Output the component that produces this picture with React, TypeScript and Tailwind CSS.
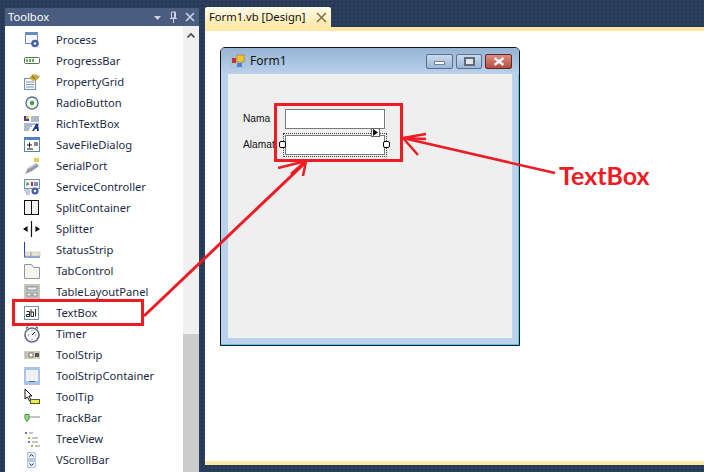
import type { ReactNode } from "react"

const font = "font-['Noto_Sans','Open_Sans',sans-serif]"

function Ico({ children }: { children: ReactNode }) {
  return (
    <svg width="18" height="18" viewBox="0 0 18 18" className="shrink-0">
      {children}
    </svg>
  )
}

const tools: { name: string; icon: ReactNode }[] = [
  {
    name: "Process",
    icon: (
      <>
        <rect x="2.500" y="1.500" width="12" height="11" fill="#f4f7fb" stroke="#6f8fb8" />
        <rect x="3" y="2" width="11" height="2" fill="#5d8ccb" />
        <circle cx="12" cy="12.500" r="3.800" fill="#4a5fa8" />
        <circle cx="12" cy="12.500" r="1.200" fill="#fff" />
      </>
    ),
  },
  {
    name: "ProgressBar",
    icon: (
      <>
        <rect x="1.500" y="5.500" width="15" height="6" rx="1" fill="#fff" stroke="#666" />
        <rect x="3" y="7" width="2" height="3" fill="#4fbf3f" />
        <rect x="6" y="7" width="2" height="3" fill="#4fbf3f" />
        <rect x="9" y="7" width="2" height="3" fill="#4fbf3f" />
      </>
    ),
  },
  {
    name: "PropertyGrid",
    icon: (
      <>
        <rect x="1.500" y="5.500" width="11" height="11" fill="#f3f6fa" stroke="#7d8fa8" />
        <path d="M3 9h8M3 11.500h8M3 14h8" stroke="#7d9cc4" />
        <path d="M6 5l4-4 7 2-3 4-4 1z" fill="#c9a93f" />
        <path d="M9 3l3 3" stroke="#6f5a17" />
      </>
    ),
  },
  {
    name: "RadioButton",
    icon: (
      <>
        <circle cx="9" cy="9" r="6" fill="#f3f6fa" stroke="#5d7188" strokeWidth="1.400" />
        <circle cx="9" cy="9" r="2.200" fill="#37a53c" />
      </>
    ),
  },
  {
    name: "RichTextBox",
    icon: (
      <>
        <rect x="1" y="1" width="5" height="5" fill="#1c3fc4" />
        <rect x="3" y="1" width="3" height="3" fill="#e8c41f" />
        <rect x="1" y="4" width="2" height="2" fill="#d02020" />
        <path d="M8 2h8M8 4h8M8 6h8M1 9h15M1 11h8M1 13h6M1 15h5" stroke="#5f7596" />
        <path d="M9 16l4-7h2l1 7h-2v-2h-2l-1 2z" fill="#1c3a8c" />
      </>
    ),
  },
  {
    name: "SaveFileDialog",
    icon: (
      <>
        <rect x="1.500" y="1.500" width="15" height="14" fill="#fff" stroke="#5f7ea8" />
        <rect x="2" y="2" width="14" height="2" fill="#4c86cf" />
        <path d="M4 9h5M6.500 6.500v5M11 7h4M11 9h4M4 13h6" stroke="#111" />
      </>
    ),
  },
  {
    name: "SerialPort",
    icon: (
      <>
        <path d="M2 17l3-6 8-5 3 3-7 5z" fill="#8e98a6" />
        <path d="M5 11l8-5 1 1-8 5z" fill="#cdd3da" />
        <rect x="11" y="1" width="5" height="4" fill="#e6c94f" />
      </>
    ),
  },
  {
    name: "ServiceController",
    icon: (
      <>
        <rect x="1.500" y="1.500" width="15" height="9" fill="#eef2f7" stroke="#7d8fa8" />
        <path d="M3.500 4v4l3-2z" fill="#2c9b3a" />
        <rect x="8" y="4" width="2" height="4" fill="#c43030" />
        <path d="M12 4v4M14 4v4" stroke="#3a5ea8" strokeWidth="1.300" />
        <path d="M1 12h6M2 14h5M3 16h4" stroke="#7d9cc4" />
        <circle cx="12" cy="13" r="3.600" fill="#4a5fa8" />
        <circle cx="12" cy="13" r="1.200" fill="#fff" />
      </>
    ),
  },
  {
    name: "SplitContainer",
    icon: (
      <>
        <rect x="1.500" y="1.500" width="14" height="14" fill="#f1f1f1" stroke="#111" />
        <path d="M8.500 1.500v14" stroke="#111" />
      </>
    ),
  },
  {
    name: "Splitter",
    icon: <path d="M8.500 1v16M1 9h3M13 9h3M4 7v4l-3-2zM13 7v4l3-2z" stroke="#111" fill="#111" strokeWidth="1.200" />,
  },
  {
    name: "StatusStrip",
    icon: (
      <>
        <path d="M1.500 1v15H17" stroke="#2040c0" fill="none" />
        <rect x="2" y="11" width="15" height="4" fill="#e8e4d2" stroke="#b9b59e" strokeWidth="0.500" />
        <path d="M8 11v4" stroke="#999" />
      </>
    ),
  },
  {
    name: "TabControl",
    icon: <path d="M1.500 16.500v-14h7l2 3h6v11z" fill="#f7f5ec" stroke="#8c97a6" />,
  },
  {
    name: "TableLayoutPanel",
    icon: (
      <>
        <rect x="1" y="1" width="16" height="16" fill="#c9c5b2" />
        <rect x="4" y="4" width="10" height="3" fill="#f3f3f3" stroke="#5a78a8" strokeWidth="0.700" />
        <rect x="4" y="10" width="4" height="3" fill="#f3f3f3" stroke="#5a78a8" strokeWidth="0.700" />
        <rect x="10" y="10" width="4" height="3" fill="#f3f3f3" stroke="#5a78a8" strokeWidth="0.700" />
      </>
    ),
  },
  {
    name: "TextBox",
    icon: (
      <>
        <rect x="1.500" y="2.500" width="14" height="13" fill="#fff" stroke="#6f8fb8" />
        <path d="M3.500 7.500h3v5h-3v-2h3M8 5v7.500h2.500V8H8M12.500 5v7.500" stroke="#111" fill="none" strokeWidth="0.900" />
      </>
    ),
  },
  {
    name: "Timer",
    icon: (
      <>
        <circle cx="9" cy="10" r="7" fill="#f5f5f5" stroke="#5c6a8c" strokeWidth="1.600" />
        <path d="M5 1.500l-2 2M13 1.500l2 2" stroke="#5c6a8c" strokeWidth="1.500" />
        <path d="M9 10l3-3" stroke="#111" />
        <path d="M9 5v1M5 10h1M12 10h1M9 14v1" stroke="#777" />
      </>
    ),
  },
  {
    name: "ToolStrip",
    icon: (
      <>
        <rect x="1" y="5" width="16" height="8" fill="#d2ceb9" />
        <path d="M3 6.500v5" stroke="#8c8974" strokeDasharray="1 1" />
        <rect x="6" y="7" width="4" height="4" fill="#fff" stroke="#444" strokeWidth="0.700" />
        <rect x="12" y="7" width="4" height="4" fill="#555" />
      </>
    ),
  },
  {
    name: "ToolStripContainer",
    icon: (
      <>
        <rect x="1" y="0" width="16" height="18" fill="#a9c4e6" />
        <rect x="3" y="3" width="12" height="11" fill="#f1f1f1" />
        <rect x="6" y="14" width="6" height="1" fill="#4a6ea8" />
      </>
    ),
  },
  {
    name: "ToolTip",
    icon: (
      <>
        <path d="M2 1v10l2.500-2 2 4 1.500-1-2-4h3z" fill="#fff" stroke="#111" />
        <rect x="7.500" y="11.500" width="9" height="4" fill="#f1ee3a" stroke="#555" />
      </>
    ),
  },
  {
    name: "TrackBar",
    icon: (
      <>
        <path d="M6 8h11" stroke="#8a8a8a" />
        <path d="M2 5.500h4v4l-2 3-2-3z" fill="#9fdc88" stroke="#3d8a3a" />
      </>
    ),
  },
  {
    name: "TreeView",
    icon: (
      <>
        <rect x="2" y="2" width="2" height="2" fill="#6a7f9c" />
        <rect x="5" y="7" width="2" height="2" fill="#c9a93f" />
        <rect x="5" y="11" width="2" height="2" fill="#6a7f9c" />
        <rect x="8" y="15" width="2" height="2" fill="#c9a93f" />
        <path d="M6 3h4M9 8h6M9 12h6M12 16h5" stroke="#8a8a8a" />
      </>
    ),
  },
  {
    name: "VScrollBar",
    icon: (
      <>
        <rect x="4" y="1" width="9" height="16" fill="#b5c9e3" />
        <rect x="5" y="2" width="7" height="5" fill="#e3ecf7" />
        <rect x="5" y="11" width="7" height="5" fill="#e3ecf7" />
        <path d="M6.500 5.500l2-2 2 2M6.500 12.500l2 2 2-2" stroke="#334" fill="none" />
      </>
    ),
  },
]

function Annotations() {
  const red = "#ed1c24"
  return (
    <svg width="704" height="472" viewBox="0 0 704 472" className="absolute left-0 top-0 pointer-events-none">
      <g fill="none" stroke={red} strokeWidth="3">
        <rect x="13.500" y="300.500" width="129" height="24" />
        <rect x="275.500" y="104.500" width="126" height="56" />
        {/* big arrow from toolbox */}
        <path d="M144 316 L306 162" />
        <path d="M306 161 L278 168 M306 161 L291 174 M306 161 L303 176" strokeWidth="2.500" />
        {/* arrow from the label */}
        <path d="M555 173 L403 138" strokeWidth="2.500" />
        <path d="M403 138 L426 134 M403 138 L426 139 M403 138 L418 155" strokeWidth="2.500" />
      </g>
    </svg>
  )
}

export default function App() {
  return (
    <div className={`relative w-[704px] h-[472px] overflow-hidden bg-[#2c3e5e] bg-[radial-gradient(#25344f_1px,transparent_1px)] bg-[length:4px_4px] ${font}`}>
      <div className="flex h-full pl-[5px] pt-[8px]">
        {/* toolbox */}
        <aside className="w-[194px] flex flex-col shrink-0">
          <div className="h-[18px] bg-[#4a5d80] flex items-center justify-between pl-[3px] pr-[4px] text-white text-[11.200px] leading-none rounded-t-[1px]">
            <span>Toolbox</span>
            <div className="flex items-center gap-[7px] text-[#ced4df]">
              <svg width="9" height="9" viewBox="0 0 9 9">
                <path d="M1 3h7L4.500 7z" fill="#ced4df" />
              </svg>
              <svg width="9" height="12" viewBox="0 0 9 12">
                <path d="M2.500 1h4v6h-4zM1 7.500h7M4.500 8v4M5.500 1v6" stroke="#ced4df" fill="none" />
              </svg>
              <svg width="10" height="10" viewBox="0 0 10 10">
                <path d="M1 1l8 8M9 1l-8 8" stroke="#ced4df" strokeWidth="1.600" />
              </svg>
            </div>
          </div>
          <div className="flex-1 flex bg-white min-h-0">
            <div className="flex-1 pt-[3px] overflow-hidden">
              {tools.map((t) => (
                <div key={t.name} className="h-[21px] flex items-center pl-[18px] gap-[15px] text-[11.200px] text-[#1b2a44]">
                  <Ico>{t.icon}</Ico>
                  <span className="leading-none">{t.name}</span>
                </div>
              ))}
            </div>
            <div className="w-[16px] bg-[#f0f0f0] flex flex-col justify-between">
              <svg width="16" height="18" viewBox="0 0 16 18">
                <path d="M4.500 11.500L8 8l3.500 3.500" stroke="#444" strokeWidth="1.600" fill="none" />
              </svg>
              <div className="h-[138px] bg-[#cdcdcd]" />
            </div>
          </div>
        </aside>

        {/* designer */}
        <main className="flex-1 ml-[6px] flex flex-col min-w-0 pb-[7px]">
          <div className="flex h-[19px] shrink-0">
            <div className="w-[126px] h-[20px] -mt-[1px] bg-gradient-to-b from-[#fffbea] to-[#ffe8a6] rounded-t-[2px] flex items-center justify-between pl-[4px] pr-[4px] text-[11.200px] text-[#111]">
              <span className="leading-none whitespace-nowrap">Form1.vb [Design]</span>
              <svg width="11" height="11" viewBox="0 0 11 11">
                <path d="M1 1l9 9M10 1l-9 9" stroke="#7d6f45" strokeWidth="1.500" />
              </svg>
            </div>
          </div>
          <div className="flex-1 bg-white border-y-4 border-[#ffe8a6] pl-[15px] pt-[16px]">
            {/* the form */}
            <div className="w-[300px] h-[299px] rounded-t-[5px] border border-[#14181e] bg-[#b9d1ea] shadow-[inset_-1px_-1px_0_#4fc8ec] flex flex-col px-[7px] pb-[7px]">
              <div className="h-[26px] shrink-0 flex items-center justify-between -mx-[7px] pl-[10px] pr-[7px] rounded-t-[4px] bg-gradient-to-b from-[#97b4d4] to-[#b9d1ea]">
                <div className="flex items-center gap-[4px] text-[12px] text-[#111]">
                  <svg width="15" height="14" viewBox="0 0 15 14">
                    <rect x="0.500" y="0.500" width="14" height="13" fill="none" stroke="#a9b4c0" strokeWidth="0.500" />
                    <rect x="6" y="1" width="7" height="7" fill="#f4c430" stroke="#a9821c" strokeWidth="0.700" />
                    <rect x="1" y="4" width="4" height="5" fill="#c43030" />
                    <rect x="6" y="9" width="5" height="4" fill="#4a84d8" />
                  </svg>
                  <span className="leading-none">Form1</span>
                </div>
                <div className="flex gap-[3px]">
                  <div className="w-[27px] h-[15px] rounded-[2px] border border-[#5d6f88] bg-gradient-to-b from-[#c9dbef] to-[#9cb7d6] flex items-center justify-center">
                    <div className="w-[11px] h-[4px] bg-white border border-[#7a8290] mt-[4px]" />
                  </div>
                  <div className="w-[26px] h-[15px] rounded-[2px] border border-[#5d6f88] bg-gradient-to-b from-[#c9dbef] to-[#9cb7d6] flex items-center justify-center">
                    <div className="w-[11px] h-[9px] bg-[#dfe6ee] border-2 border-[#646c7a]" />
                  </div>
                  <div className="w-[27px] h-[15px] rounded-[2px] border border-[#5a2a26] bg-gradient-to-b from-[#dc8f82] to-[#b84a3e] flex items-center justify-center">
                    <svg width="12" height="9" viewBox="0 0 12 9">
                      <path d="M1.500 1l9 7M10.500 1l-9 7" stroke="#f4f4f4" strokeWidth="2.400" />
                    </svg>
                  </div>
                </div>
              </div>
              <div className="flex-1 bg-[#efefef] pl-[15px] pt-[35px] text-[10.200px] text-[#111] font-['Liberation_Sans',sans-serif]">
                <div className="flex items-center h-[20px]">
                  <span className="w-[42px] leading-none">Nama</span>
                  <div className="w-[100px] h-[20px] bg-white border border-[#7a7a7a]" />
                </div>
                <div className="relative flex items-center h-[20px] mt-[6px]">
                  <span className="w-[42px] leading-none">Alamat</span>
                  <div className="w-[100px] h-[20px] bg-white border border-[#7a7a7a]" />
                  <div className="absolute left-[40px] -top-[2px] w-[104px] h-[24px] border border-dotted border-[#444]" />
                  <div className="absolute left-[36px] top-[6px] w-[7px] h-[7px] bg-white border border-black rounded-[2px]" />
                  <div className="absolute left-[140px] top-[6px] w-[7px] h-[7px] bg-white border border-black rounded-[2px]" />
                  <div className="absolute left-[128px] -top-[7px] w-[9px] h-[9px] bg-white border border-[#666] flex items-center justify-center">
                    <svg width="5" height="7" viewBox="0 0 5 7">
                      <path d="M0 0l5 3.500L0 7z" fill="#111" />
                    </svg>
                  </div>
                </div>
              </div>
            </div>
          </div>
        </main>
      </div>

      <Annotations />
      <span className="absolute left-[559px] top-[159px] text-[25px] leading-[32px] font-bold text-[#ed1c24] font-['Lato',sans-serif]">
        TextBox
      </span>
    </div>
  )
}
